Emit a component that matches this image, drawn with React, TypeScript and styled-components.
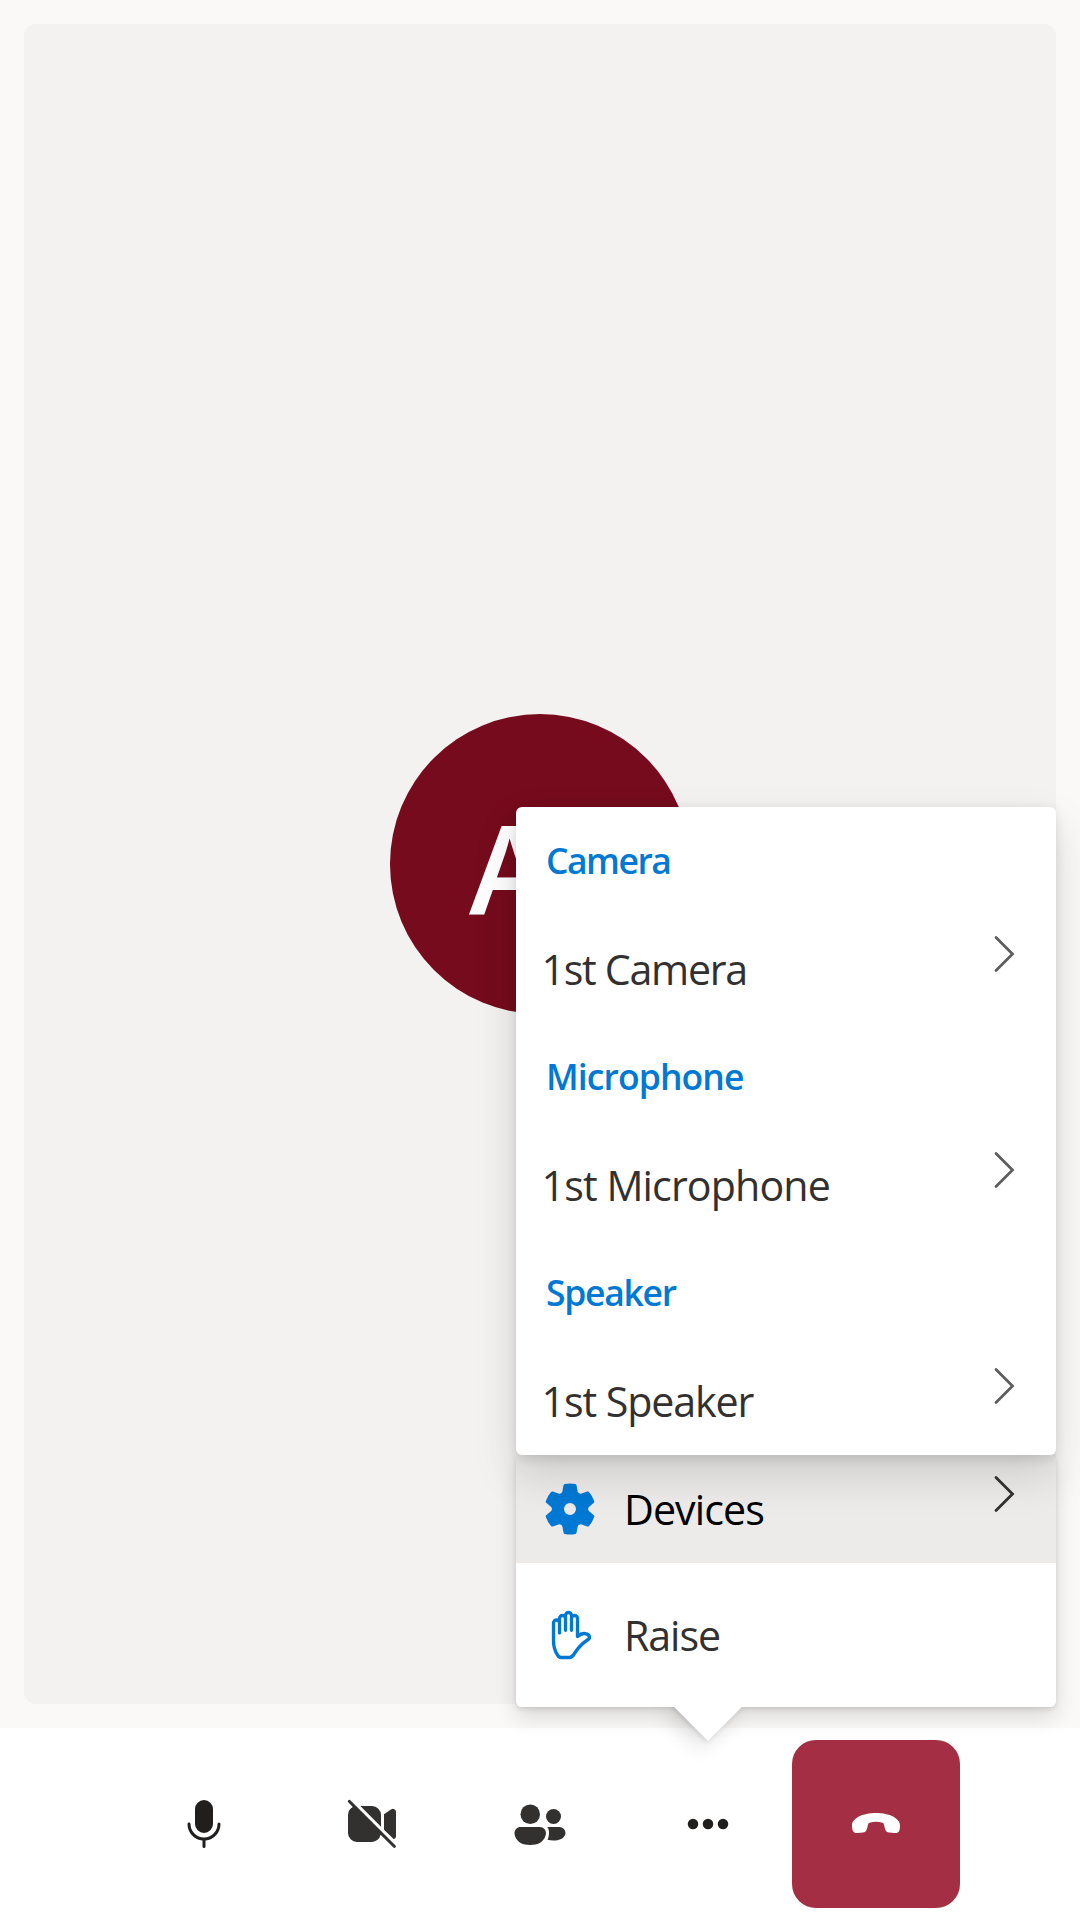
import React from "react";
import styled, { createGlobalStyle } from "styled-components";

const GlobalStyle = createGlobalStyle`
  *, *::before, *::after { box-sizing: border-box; }
  body {
    margin: 0;
    background: #faf9f8;
    font-family: "Segoe UI", "Open Sans", "Noto Sans", sans-serif;
  }
`;

const Screen = styled.main`
  position: relative;
  display: flex;
  flex-direction: column;
  width: 1080px;
  height: 1920px;
  overflow: hidden;
  background: #faf9f8;
`;

const Gallery = styled.section`
  flex: 1;
  display: flex;
  padding: 24px;
`;

const VideoTile = styled.div`
  flex: 1;
  display: flex;
  align-items: center;
  justify-content: center;
  border-radius: 12px;
  background: #f3f2f1;
`;

const Avatar = styled.div`
  display: flex;
  align-items: center;
  width: 300px;
  height: 300px;
  padding: 5px 0 0 79px;
  border-radius: 50%;
  background: #750b1c;
  color: #fff;
  font-size: 123px;
  font-weight: 600;
  line-height: 1;
`;

const ControlBar = styled.nav`
  display: flex;
  align-items: center;
  justify-content: center;
  height: 192px;
  background: #fff;
`;

const ControlButton = styled.button<{ $danger?: boolean }>`
  display: flex;
  align-items: center;
  justify-content: center;
  width: 168px;
  height: 168px;
  padding: 0;
  border: 0;
  border-radius: 24px;
  background: ${(p) => (p.$danger ? "#a42e43" : "#fff")};
  color: ${(p) => (p.$danger ? "#fff" : "#323130")};
`;

const Icon = styled.svg`
  flex: none;
  width: 60px;
  height: 60px;
  fill: currentColor;
`;

const menuShadow = "0 9.6px 21.6px rgba(0, 0, 0, 0.132), 0 1.8px 5.4px rgba(0, 0, 0, 0.108)";
const subMenuShadow = "0 19.2px 43.2px rgba(0, 0, 0, 0.132), 0 3.6px 10.8px rgba(0, 0, 0, 0.108)";

const Menu = styled.div`
  position: absolute;
  top: 1455px;
  right: 24px;
  width: 540px;
  border-radius: 6px;
  box-shadow: ${menuShadow};
`;

const Beak = styled.div`
  position: absolute;
  left: 168px;
  bottom: -24px;
  width: 48px;
  height: 48px;
  transform: rotate(45deg);
  background: #fff;
  box-shadow: ${menuShadow};
`;

const MenuSurface = styled.div`
  position: relative;
  overflow: hidden;
  border-radius: 6px;
  background: #fff;
`;

const SubMenu = styled.div`
  position: absolute;
  top: 807px;
  right: 24px;
  width: 540px;
  border-radius: 6px;
  background: #fff;
  box-shadow: ${subMenuShadow};
`;

const SectionHeader = styled.div`
  display: flex;
  align-items: center;
  height: 108px;
  padding: 0 24px 1px 30px;
  color: #0078d4;
  font-size: 35.5px;
  font-weight: 600;
`;

const MenuItem = styled.div<{ $active?: boolean; $tall?: boolean; $inset?: number }>`
  display: flex;
  align-items: center;
  height: ${(p) => (p.$tall ? 144 : 108)}px;
  padding: 0 36px 0 ${(p) => p.$inset ?? 24}px;
  background: ${(p) => (p.$active ? "#edebe9" : "transparent")};
  color: ${(p) => (p.$active ? "#000" : "#323130")};
  font-size: 41.2px;
`;

const IconSlot = styled.span`
  display: flex;
  width: 84px;
  color: #0078d4;
`;

const Label = styled.span<{ $tracking: number }>`
  flex: 1;
  padding-bottom: 1px;
  white-space: nowrap;
  letter-spacing: ${(p) => p.$tracking}px;
`;

const ChevronIcon = styled.svg<{ $dark?: boolean }>`
  width: 30px;
  height: 42px;
  margin-bottom: 30px;
  fill: none;
  stroke: ${(p) => (p.$dark ? "#323130" : "#605e5c")};
  stroke-width: 2.8;
  stroke-linecap: round;
`;

const Chevron = ({ dark }: { dark?: boolean }) => (
  <ChevronIcon $dark={dark} viewBox="0 0 30 42">
    <path d="M6 4.5 22.5 21 6 37.5" />
  </ChevronIcon>
);

const MicIcon = () => (
  <Icon viewBox="0 0 20 20" color="#201f1e">
    <path d="M10 13a3 3 0 0 0 3-3V5a3 3 0 0 0-6 0v5a3 3 0 0 0 3 3ZM5 9.5c.28 0 .5.22.5.5a4.5 4.5 0 1 0 9 0 .5.5 0 0 1 1 0 5.5 5.5 0 0 1-5 5.48v2.02a.5.5 0 0 1-1 0v-2.02A5.5 5.5 0 0 1 4.5 10c0-.28.22-.5.5-.5Z" />
  </Icon>
);

const VideoOffIcon = () => (
  <Icon viewBox="0 0 20 20">
    <path d="M2.85 2.15a.5.5 0 1 0-.7.7l1.45 1.5A3 3 0 0 0 2 7v6a3 3 0 0 0 3 3h5a3 3 0 0 0 2.85-2.44l4.3 4.29a.5.5 0 0 0 .7-.7l-15-15ZM13 10.88 6.12 4H10a3 3 0 0 1 3 3v3.88ZM14 11.88V6.73l2.45-1.62A1 1 0 0 1 18 5.94v8.12c0 .5-.36.87-.8.97L14 11.88Z" />
  </Icon>
);

const PeopleIcon = () => (
  <Icon viewBox="0 0 20 20">
    <circle cx="6.75" cy="6.75" r="3.25" />
    <circle cx="14.5" cy="7.5" r="2.5" />
    <path d="M1.5 13c0-1.1.9-2 2-2H10a2 2 0 0 1 2 2s0 4-5.25 4-5.25-4-5.25-4ZM12.4 11h4.1a2 2 0 0 1 2 2s0 2.5-4 2.5c-.72 0-1.44-.07-2-.22.35-.75.5-1.5.5-2.28 0-.78-.1-1.4-.6-2Z" />
  </Icon>
);

const MoreIcon = () => (
  <Icon viewBox="0 0 20 20" color="#201f1e">
    <circle cx="5" cy="10" r="1.75" />
    <circle cx="10" cy="10" r="1.75" />
    <circle cx="15" cy="10" r="1.75" />
  </Icon>
);

const EndCallIcon = () => (
  <Icon viewBox="0 0 20 20">
    <path d="M10 6.33c4.6 0 8 1.85 8 4.07 0 .6 0 1.2-.2 1.75-.28.7-.86.92-1.7.85l-1.7-.14c-.76-.07-1.17-.45-1.38-1.16l-.4-1.6c-.07-.3-.2-.42-.47-.5A7.5 7.5 0 0 0 10 9.25c-.75 0-1.45.1-2.15.35-.27.08-.4.2-.47.5l-.4 1.6c-.2.7-.62 1.1-1.38 1.16L3.9 13c-.84.07-1.42-.2-1.7-.95-.15-.45-.2-1.05-.2-1.65 0-2.22 3.4-4.07 8-4.07Z" />
  </Icon>
);

const GearIcon = () => (
  <Icon viewBox="0 0 20 20">
    <path d="M1.91 7.38A8.5 8.5 0 0 1 3.7 4.3a.5.5 0 0 1 .54-.13l1.92.68a1 1 0 0 0 1.32-.76l.36-2a.5.5 0 0 1 .4-.4 8.53 8.53 0 0 1 3.55 0c.2.04.35.2.38.4l.37 2a1 1 0 0 0 1.32.76l1.92-.68a.5.5 0 0 1 .54.13 8.5 8.5 0 0 1 1.78 3.08c.06.2 0 .4-.15.54l-1.56 1.32a1 1 0 0 0 0 1.52l1.56 1.32a.5.5 0 0 1 .15.54 8.5 8.5 0 0 1-1.78 3.08.5.5 0 0 1-.54.13l-1.92-.68a1 1 0 0 0-1.32.76l-.37 2a.5.5 0 0 1-.38.4 8.53 8.53 0 0 1-3.56 0 .5.5 0 0 1-.39-.4l-.36-2a1 1 0 0 0-1.32-.76l-1.92.68a.5.5 0 0 1-.54-.13 8.5 8.5 0 0 1-1.78-3.08.5.5 0 0 1 .15-.54l1.56-1.32a1 1 0 0 0 0-1.52L2.06 7.92a.5.5 0 0 1-.15-.54ZM8 10a2 2 0 1 0 4 0 2 2 0 0 0-4 0Z" />
  </Icon>
);

const HandIcon = () => (
  <Icon viewBox="0 0 20 20">
    <g fill="none" stroke="currentColor" strokeWidth="1.12" strokeLinecap="round" strokeLinejoin="round">
      <path d="M6.5 9.3V4.5a1 1 0 0 1 2 0v3.9V3.5a1 1 0 0 1 2 0v4.9V4.5a1 1 0 0 1 2 0v6c1.1-1 2.2-1.15 3-.85.6.2 1 .75 1 1.3 0 .15 0 .2-.15.3-1.5 1-2.5 1.8-3.5 3.05-.6.7-1.1 1.4-1.5 2.1-.4.7-.9 1.1-1.6 1.1H7.1c-.5 0-.95-.3-1.25-.8-.9-1.4-1.35-2.9-1.35-4.7V6a1 1 0 0 1 2 0" />
    </g>
  </Icon>
);

const devices = [
  { title: "Camera", titleTracking: -1.5, name: "1st Camera", tracking: -1.3 },
  { title: "Microphone", titleTracking: -0.9, name: "1st Microphone", tracking: -0.9 },
  { title: "Speaker", titleTracking: -1.3, name: "1st Speaker", tracking: -1.1 },
];

export default function App() {
  return (
    <>
      <GlobalStyle />
      <Screen>
        <Gallery>
          <VideoTile>
            <Avatar>A</Avatar>
          </VideoTile>
        </Gallery>
        <ControlBar>
          <ControlButton aria-label="Microphone"><MicIcon /></ControlButton>
          <ControlButton aria-label="Camera"><VideoOffIcon /></ControlButton>
          <ControlButton aria-label="People"><PeopleIcon /></ControlButton>
          <ControlButton aria-label="More"><MoreIcon /></ControlButton>
          <ControlButton aria-label="Leave" $danger><EndCallIcon /></ControlButton>
        </ControlBar>
        <Menu>
          <Beak />
          <MenuSurface>
            <MenuItem $active>
              <IconSlot><GearIcon /></IconSlot>
              <Label $tracking={-0.95}>Devices</Label>
              <Chevron dark />
            </MenuItem>
            <MenuItem $tall>
              <IconSlot><HandIcon /></IconSlot>
              <Label $tracking={-1.1}>Raise</Label>
            </MenuItem>
          </MenuSurface>
        </Menu>
        <SubMenu>
          {devices.map((d) => (
            <React.Fragment key={d.title}>
              <SectionHeader>
                <Label $tracking={d.titleTracking}>{d.title}</Label>
              </SectionHeader>
              <MenuItem $inset={25.5}>
                <Label $tracking={d.tracking}>{d.name}</Label>
                <Chevron />
              </MenuItem>
            </React.Fragment>
          ))}
        </SubMenu>
      </Screen>
    </>
  );
}
